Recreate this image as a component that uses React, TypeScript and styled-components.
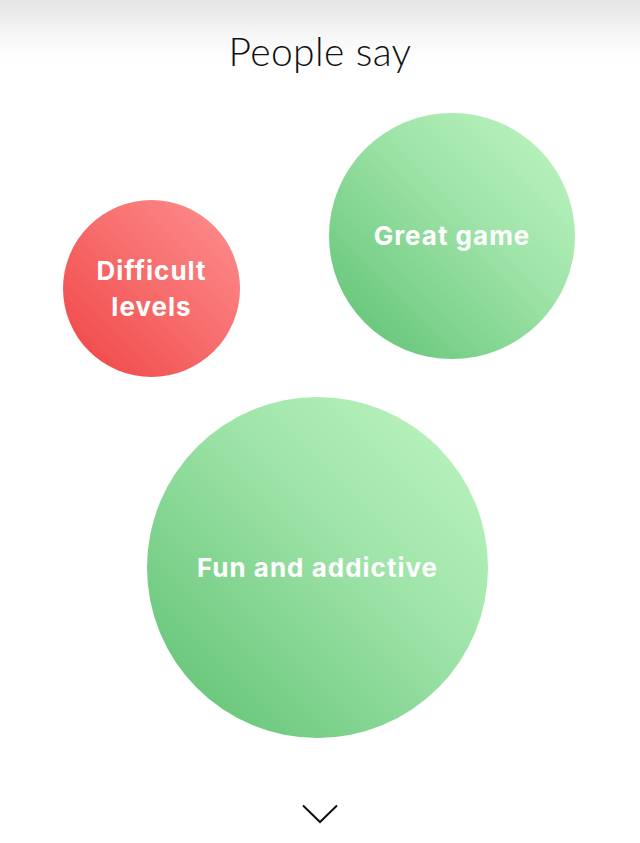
import styled, { createGlobalStyle } from 'styled-components';

interface Bubble {
  id: string;
  label: string;
  tone: 'good' | 'bad';
  size: number;
  x: number;
  y: number;
}

const bubbles: Bubble[] = [
  { id: 'great', label: 'Great game', tone: 'good', size: 246, x: 329, y: 53 },
  { id: 'difficult', label: 'Difficult levels', tone: 'bad', size: 177, x: 63, y: 140 },
  { id: 'fun', label: 'Fun and addictive', tone: 'good', size: 341, x: 147, y: 337 }
];

export default function App() {
  return (
    <Page>
      <GlobalStyle />
      <Header>
        <Title>People say</Title>
      </Header>
      <Canvas>
        {bubbles.map((b) => (
          <Circle key={b.id} $tone={b.tone} style={{ left: b.x, top: b.y, width: b.size, height: b.size }}>
            <Label $narrow={b.tone === 'bad'}>{b.label}</Label>
          </Circle>
        ))}
      </Canvas>
      <Footer>
        <svg width="36" height="20" viewBox="0 0 36 20" fill="none">
          <path d="M1 1.5 L18 18 L35 1.5" stroke="#111" strokeWidth="2" />
        </svg>
      </Footer>
    </Page>
  );
}

const GlobalStyle = createGlobalStyle`
  html, body {
    margin: 0;
    padding: 0;
    background: #ffffff;
  }
`;

const Page = styled.div`
  width: 640px;
  height: 843px;
  display: flex;
  flex-direction: column;
  font-family: Lato, 'Open Sans', sans-serif;
  overflow: hidden;
`;

const Header = styled.div`
  height: 60px;
  display: flex;
  justify-content: center;
  align-items: flex-end;
  background: linear-gradient(to bottom, #e4e4e4 0%, #f7f7f7 60%, #ffffff 100%);
`;

const Title = styled.h1`
  margin: 0 0 -11px;
  color: #111111;
  font-size: 39px;
  font-weight: 300;
  line-height: 1;
  letter-spacing: 0.4px;
`;

const Canvas = styled.div`
  position: relative;
  height: 732px;
`;

const Circle = styled.div<{ $tone: 'good' | 'bad' }>`
  position: absolute;
  border-radius: 50%;
  display: flex;
  align-items: center;
  justify-content: center;
  text-align: center;
  background: ${(p) =>
    p.$tone === 'good'
      ? 'linear-gradient(225deg, #c0f8c3 0%, #9ee3a8 42%, #5cc070 100%)'
      : 'linear-gradient(225deg, #fe9090 0%, #f76b6b 50%, #ef4343 100%)'};
`;

const Label = styled.span<{ $narrow: boolean }>`
  color: #ffffff;
  font-family: Inter, 'Open Sans', sans-serif;
  font-size: 26px;
  font-weight: 700;
  line-height: 36px;
  letter-spacing: 1px;
  max-width: ${(p) => (p.$narrow ? '140px' : 'none')};
`;

const Footer = styled.div`
  flex: 1;
  display: flex;
  justify-content: center;
  align-items: flex-start;
  padding-top: 12px;
`;
